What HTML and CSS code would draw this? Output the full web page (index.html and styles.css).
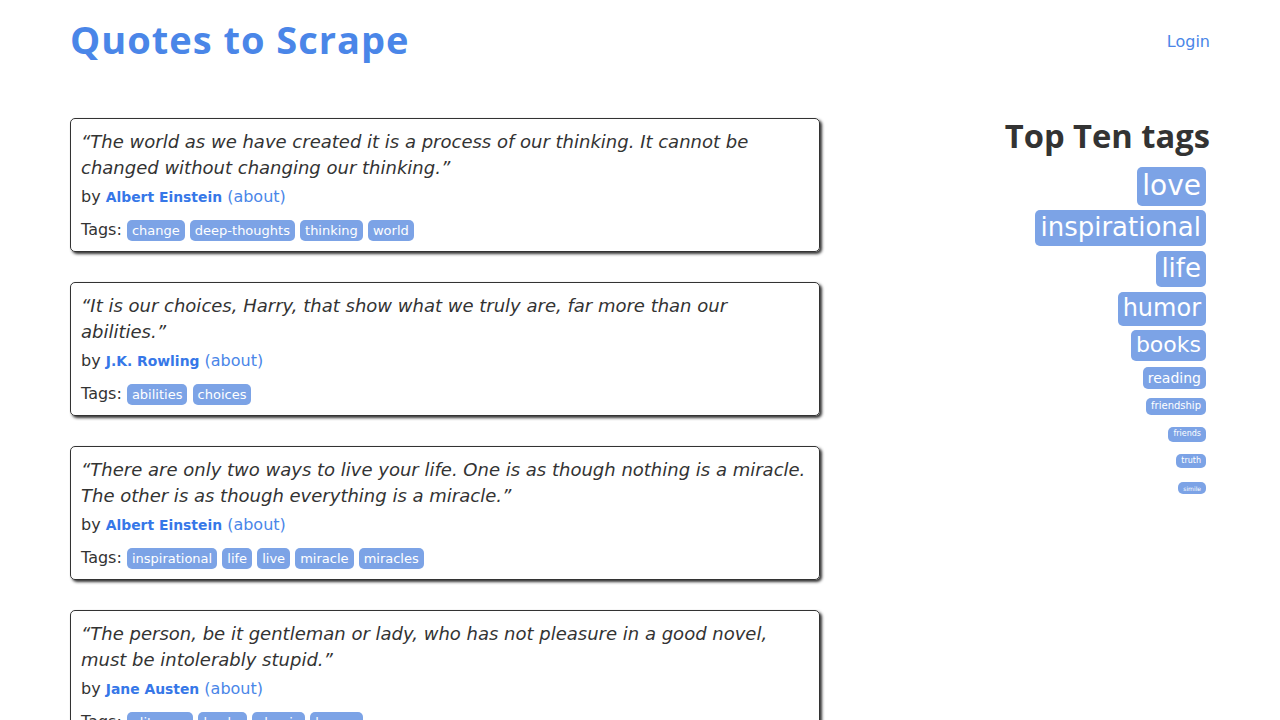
FILE: index.html
```html
<!DOCTYPE html>
<html lang="en">
<head>
<meta charset="utf-8">
<title>Quotes to Scrape</title>
<link rel="stylesheet" href="styles.css">
</head>
<body>
<div class="container">
  <header class="header">
    <h1 class="title"><a href="#">Quotes to Scrape</a></h1>
    <a class="login" href="#">Login</a>
  </header>
  <div class="layout">
    <main class="quotes">
      <div class="quote">
        <span class="text">“The world as we have created it is a process of our thinking. It cannot be changed without changing our thinking.”</span>
        <div class="byline">by <small class="author">Albert Einstein</small> <a class="about" href="#">(about)</a></div>
        <div class="tags">Tags: <a class="tag" href="#">change</a> <a class="tag" href="#">deep-thoughts</a> <a class="tag" href="#">thinking</a> <a class="tag" href="#">world</a></div>
      </div>
      <div class="quote">
        <span class="text">“It is our choices, Harry, that show what we truly are, far more than our abilities.”</span>
        <div class="byline">by <small class="author">J.K. Rowling</small> <a class="about" href="#">(about)</a></div>
        <div class="tags">Tags: <a class="tag" href="#">abilities</a> <a class="tag" href="#">choices</a></div>
      </div>
      <div class="quote">
        <span class="text">“There are only two ways to live your life. One is as though nothing is a miracle. The other is as though everything is a miracle.”</span>
        <div class="byline">by <small class="author">Albert Einstein</small> <a class="about" href="#">(about)</a></div>
        <div class="tags">Tags: <a class="tag" href="#">inspirational</a> <a class="tag" href="#">life</a> <a class="tag" href="#">live</a> <a class="tag" href="#">miracle</a> <a class="tag" href="#">miracles</a></div>
      </div>
      <div class="quote">
        <span class="text">“The person, be it gentleman or lady, who has not pleasure in a good novel, must be intolerably stupid.”</span>
        <div class="byline">by <small class="author">Jane Austen</small> <a class="about" href="#">(about)</a></div>
        <div class="tags">Tags: <a class="tag" href="#">aliteracy</a> <a class="tag" href="#">books</a> <a class="tag" href="#">classic</a> <a class="tag" href="#">humor</a></div>
      </div>
    </main>
    <aside class="sidebar">
      <h2 class="side-title">Top Ten tags</h2>
      <div class="tag-list">
        <a class="top-tag" href="#" style="font-size: 28px">love</a>
        <a class="top-tag" href="#" style="font-size: 26px">inspirational</a>
        <a class="top-tag" href="#" style="font-size: 26px">life</a>
        <a class="top-tag" href="#" style="font-size: 24px">humor</a>
        <a class="top-tag" href="#" style="font-size: 22px">books</a>
        <a class="top-tag" href="#" style="font-size: 14px">reading</a>
        <a class="top-tag" href="#" style="font-size: 10px">friendship</a>
        <a class="top-tag" href="#" style="font-size: 8px">friends</a>
        <a class="top-tag" href="#" style="font-size: 8px">truth</a>
        <a class="top-tag" href="#" style="font-size: 6px">simile</a>
      </div>
    </aside>
  </div>
</div>
</body>
</html>
```
FILE: styles.css
```css
html, body {
  margin: 0;
  padding: 0;
  background: #fff;
}
body {
  font-family: "DejaVu Sans", sans-serif;
  font-size: 16px;
  line-height: 24px;
  color: #333;
}
a {
  text-decoration: none;
}
.container {
  width: 1140px;
  margin: 0 auto;
}
.header {
  box-sizing: border-box;
  height: 118px;
  padding-top: 19px;
  display: flex;
  justify-content: space-between;
  align-items: flex-start;
}
.title {
  margin: 0;
  font-family: "Open Sans", Lato, sans-serif;
  font-weight: 700;
  font-size: 38px;
  line-height: 1.1;
  letter-spacing: 1px;
}
.title a {
  color: #4a86e8;
}
.login {
  margin-top: 11px;
  color: #4a86e8;
}
.layout {
  display: grid;
  grid-template-columns: 750px 360px;
  column-gap: 30px;
}
.quote {
  border: 1px solid #333;
  border-radius: 5px;
  box-shadow: 2px 2px 3px #333;
  padding: 10px 10px 9px;
  margin-bottom: 30px;
}
.text {
  display: block;
  font-style: italic;
  font-size: 18px;
  line-height: 26px;
}
.byline {
  margin-top: 4px;
}
.author {
  font-size: 13.9px;
  font-weight: bold;
  color: #3677e8;
}
.about {
  color: #4a86e8;
}
.tags {
  margin-top: 9px;
}
.tag {
  display: inline-block;
  font-size: 13px;
  line-height: 15px;
  padding: 3px 5px;
  border-radius: 5px;
  background: #7ca3e6;
  color: #fff;
}
.sidebar {
  display: flex;
  flex-direction: column;
  align-items: flex-end;
}
.side-title {
  margin: 0;
  font-family: "Open Sans", Lato, sans-serif;
  font-weight: 700;
  font-size: 32.7px;
  line-height: 1.1;
  color: #333;
}
.tag-list {
  margin-top: 13px;
  padding-right: 4px;
  display: flex;
  flex-direction: column;
  align-items: flex-end;
}
.top-tag {
  display: block;
  line-height: 1.2;
  padding: 2.5px 5px;
  border-radius: 5px;
  background: #7ca3e6;
  color: #fff;
}
.top-tag:nth-child(2) { margin-top: 4px; }
.top-tag:nth-child(3) { margin-top: 5px; }
.top-tag:nth-child(4) { margin-top: 5px; }
.top-tag:nth-child(5) { margin-top: 4px; }
.top-tag:nth-child(6) { margin-top: 6px; }
.top-tag:nth-child(7) { margin-top: 9px; }
.top-tag:nth-child(8) { margin-top: 12px; }
.top-tag:nth-child(9) { margin-top: 12px; }
.top-tag:nth-child(10) { margin-top: 14px; }
```
